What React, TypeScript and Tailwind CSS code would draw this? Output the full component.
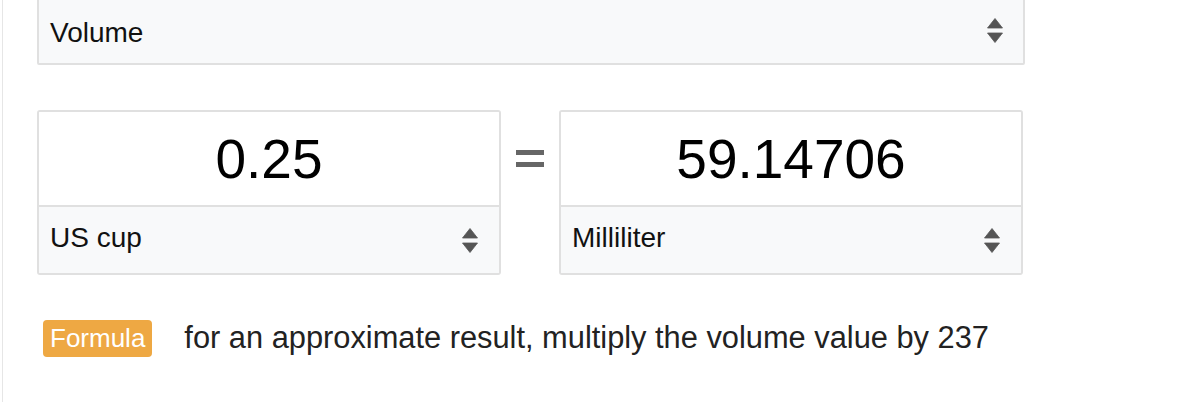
import React from "react";

function Arrows() {
  return (
    <svg width="16" height="25" viewBox="0 0 16 25" className="shrink-0">
      <path d="M8 0.5 L15.5 10 L0.5 10 Z" fill="#555" strokeLinejoin="round" stroke="#555" strokeWidth="0.8" />
      <path d="M8 24.5 L15.5 15 L0.5 15 Z" fill="#555" strokeLinejoin="round" stroke="#555" strokeWidth="0.8" />
    </svg>
  );
}

function UnitSelect({ label }: { label: string }) {
  return (
    <div className="h-[66px] bg-[#f8f9fa] flex items-center justify-between pl-[11px] pr-[21px] text-[28px] text-[#111]">
      <span className="pb-[4px]">{label}</span>
      <Arrows />
    </div>
  );
}

function Box({ value, unit }: { value: string; unit: string }) {
  return (
    <div className="w-[464px] border-2 border-[#e0e0e0] rounded-[3px] overflow-hidden">
      <div className="h-[93px] bg-white flex items-center justify-center text-[55px] text-black pt-[2px]">
        {value}
      </div>
      <div className="border-t-2 border-[#e0e0e0]">
        <UnitSelect label={unit} />
      </div>
    </div>
  );
}

export default function App() {
  return (
    <div
      className="w-[1186px] h-[406px] bg-white overflow-hidden"
      style={{ fontFamily: '"Liberation Sans", Arial, sans-serif' }}
    >
      <div className="ml-[2px] h-full border-l border-[#e6e6e6] pl-[34px]">
        <div className="w-[988px] -mt-[4px] border-2 border-[#e0e0e0] rounded-[2px] h-[69px] bg-[#f8f9fa] flex items-center justify-between pl-[11px] pr-[20px] text-[28px] text-[#111]">
          <span className="pt-[4px]">Volume</span>
          <Arrows />
        </div>
        <div className="mt-[45px] flex items-start">
          <Box value="0.25" unit="US cup" />
          <div className="w-[58px] h-[97px] flex items-center justify-center">
            <div className="flex flex-col gap-[7px]">
              <div className="w-[28px] h-[5px] bg-[#666]" />
              <div className="w-[28px] h-[5px] bg-[#666]" />
            </div>
          </div>
          <Box value="59.14706" unit="Milliliter" />
        </div>
        <div className="mt-[40px] flex items-center">
          <div className="ml-[6px] h-[37px] px-[7px] rounded-[4px] bg-[#eea843] text-white text-[26px] flex items-center">
            Formula
          </div>
          <div className="ml-[32px] text-[30.8px] text-[#222]">
            for an approximate result, multiply the volume value by 237
          </div>
        </div>
      </div>
    </div>
  );
}
